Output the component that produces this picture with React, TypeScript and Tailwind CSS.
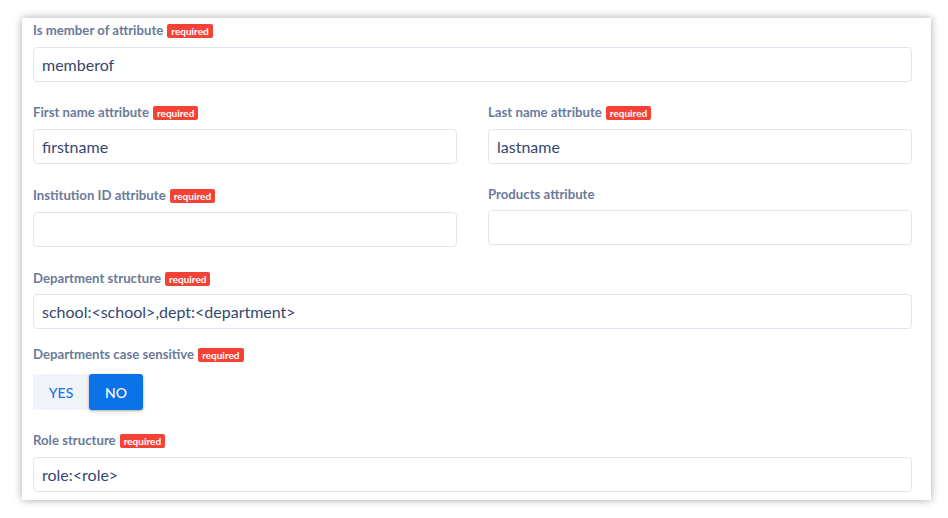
import React from "react";

const Badge = () => (
  <span className="ml-[4px] inline-flex h-[14px] items-center rounded-[2px] bg-[#f44336] px-[4px] text-[10px] font-bold leading-none text-white">
    required
  </span>
);

const Label = ({ text, req = true }: { text: string; req?: boolean }) => (
  <div className="flex h-[16px] items-center text-[13.2px] font-bold leading-none text-[#6b7a99]">
    <span>{text}</span>
    {req && <Badge />}
  </div>
);

const Input = ({ value = "" }: { value?: string }) => (
  <div className="flex h-[35px] items-center rounded-[4px] border border-[#dfe6ef] bg-white pl-[8px] text-[16px] text-[#34486f]">
    {value}
  </div>
);

export default function App() {
  return (
    <div className="h-[518px] w-[948px] bg-white pt-[18px] pl-[22px]" style={{ fontFamily: "Lato, 'Noto Sans', sans-serif" }}>
      <div className="h-[482px] w-[909px] overflow-hidden bg-white pl-[11px] pr-[19px] pt-[5px] shadow-[0_0_8px_rgba(0,0,0,0.35)]">
        <Label text="Is member of attribute" />
        <div className="mt-[8px]">
          <Input value="memberof" />
        </div>

        <div className="mt-[23px] grid grid-cols-2 gap-x-[31px]">
          <div>
            <Label text="First name attribute" />
            <div className="mt-[8px]">
              <Input value="firstname" />
            </div>
          </div>
          <div>
            <Label text="Last name attribute" />
            <div className="mt-[8px]">
              <Input value="lastname" />
            </div>
          </div>
        </div>

        <div className="mt-[24px] grid grid-cols-2 gap-x-[31px]">
          <div>
            <Label text="Institution ID attribute" />
            <div className="mt-[8px]">
              <Input />
            </div>
          </div>
          <div>
            <div className="flex h-[14px] items-center text-[13.2px] font-bold leading-none text-[#6b7a99]">Products attribute</div>
            <div className="mt-[8px]">
              <Input />
            </div>
          </div>
        </div>

        <div className="mt-[24px]">
          <Label text="Department structure" />
          <div className="mt-[7px]">
            <Input value="school:<school>,dept:<department>" />
          </div>
        </div>

        <div className="mt-[18px]">
          <Label text="Departments case sensitive" />
          <div className="mt-[11px] flex h-[36px]">
            <div className="flex w-[56px] items-center justify-center bg-[#f1f5fb] text-[14px] font-medium text-[#1a73e8]">YES</div>
            <div className="flex w-[54px] items-center justify-center rounded-[3px] bg-[#0b72e7] text-[14px] font-medium text-white shadow-[0_1px_3px_rgba(0,0,0,0.35)]">NO</div>
          </div>
        </div>

        <div className="mt-[23px]">
          <Label text="Role structure" />
          <div className="mt-[8px]">
            <Input value="role:<role>" />
          </div>
        </div>
      </div>
    </div>
  );
}
